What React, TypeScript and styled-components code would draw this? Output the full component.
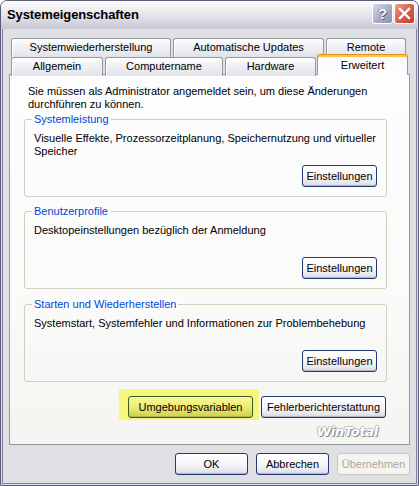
import styled, { createGlobalStyle } from "styled-components";

const GlobalStyle = createGlobalStyle`
  html, body {
    margin: 0;
    padding: 0;
    background: #ffffff;
  }
  * {
    box-sizing: border-box;
  }
`;

const Window = styled.div`
  width: 419px;
  height: 486px;
  display: flex;
  flex-direction: column;
  border: 1px solid #5b5a78;
  border-radius: 7px 7px 0 0;
  overflow: hidden;
  background: #e0dfe3;
  font-family: "Liberation Sans", Arial, sans-serif;
  font-size: 11px;
  color: #000;
`;

const TitleBar = styled.div`
  height: 28px;
  flex: none;
  display: flex;
  align-items: flex-start;
  justify-content: space-between;
  padding: 2px 3px 0 6px;
  background: linear-gradient(
    180deg,
    #ffffff 0%,
    #f1f1f5 25%,
    #dfdfe8 60%,
    #c7c7d4 100%
  );
`;

const Title = styled.span`
  font-weight: bold;
  font-size: 13px;
  line-height: 24px;
  letter-spacing: -0.1px;
`;

const Caption = styled.div`
  display: flex;
  gap: 1px;
`;

const HelpButton = styled.div`
  width: 21px;
  height: 21px;
  border: 1px solid #ffffff;
  border-radius: 3px;
  background: linear-gradient(135deg, #d9dbea 0%, #a9abc5 55%, #8e90ad 100%);
  display: flex;
  align-items: center;
  justify-content: center;
  font-family: "Liberation Sans", Arial, sans-serif;
  font-weight: bold;
  font-size: 15px;
  color: #f6f6fa;
  text-shadow: 1px 1px 0 #5d5f7e, -1px 0 0 #7c7e9c;
`;

const CloseButton = styled.div`
  width: 21px;
  height: 21px;
  border: 1px solid #ffffff;
  border-radius: 3px;
  background: linear-gradient(135deg, #f0a08e 0%, #d9604a 50%, #c13e2a 100%);
  display: flex;
  align-items: center;
  justify-content: center;
`;

const Body = styled.div`
  flex: 1;
  display: flex;
  flex-direction: column;
  padding: 9px 7px 9px 7px;
  border: 1px solid #dedde8;
  border-top: none;
  box-shadow: inset 1px 0 #807f99, inset -1px 0 #807f99, inset 0 -1px #807f99;
`;

const TabStrip = styled.div`
  display: flex;
  flex-direction: column;
  padding-left: 2px;
`;

const TabRow = styled.div<{ $h: number }>`
  display: flex;
  align-items: flex-end;
  gap: 2px;
  height: ${(p) => p.$h}px;
`;

const Tab = styled.div<{ $w: number; $active?: boolean }>`
  width: ${(p) => p.$w}px;
  height: ${(p) => (p.$active ? 21 : 19)}px;
  align-self: ${(p) => (p.$active ? "flex-end" : "stretch")};
  margin-bottom: ${(p) => (p.$active ? -1 : 0)}px;
  position: relative;
  z-index: ${(p) => (p.$active ? 2 : 1)};
  border: 1px solid #919b9c;
  border-bottom: none;
  border-top-color: ${(p) => (p.$active ? "#e68b2c" : "#919b9c")};
  border-radius: 3px 3px 0 0;
  background: ${(p) =>
    p.$active
      ? "#fcfcfe"
      : "linear-gradient(180deg, #fefefe 0%, #f1f1f5 40%, #e2e2ea 100%)"};
  box-shadow: ${(p) =>
    p.$active ? "inset 0 2px 0 #ffc83c" : "inset 1px 1px 0 #ffffff"};
  text-align: center;
  line-height: ${(p) => (p.$active ? 16 : 17)}px;
  padding-top: ${(p) => (p.$active ? 2 : 0)}px;
  white-space: nowrap;
`;

const Panel = styled.div`
  flex: 1;
  display: flex;
  flex-direction: column;
  border: 1px solid #919b9c;
  background: linear-gradient(180deg, #fdfdfe 0%, #fafaf9 60%, #f4f4f1 100%);
  padding: 10px 22px 0 14px;
`;

const Intro = styled.p`
  margin: 0 0 0 4px;
  line-height: 13px;
`;

const Group = styled.div<{ $top: number }>`
  position: relative;
  height: 78px;
  margin-top: ${(p) => p.$top}px;
  border: 1px solid #d0d0bf;
  border-radius: 3px;
  display: flex;
  flex-direction: column;
  justify-content: space-between;
  padding: 12px 9px 9px 9px;
`;

const Legend = styled.span`
  position: absolute;
  top: -7px;
  left: 7px;
  padding: 0 2px;
  line-height: 13px;
  color: #0046d5;
  background: #fcfcfd;
`;

const GroupText = styled.p`
  margin: 0;
  line-height: 13px;
`;

const Button = styled.button<{ $w: number; $kind?: "normal" | "yellow" | "off" }>`
  width: ${(p) => p.$w}px;
  height: 22px;
  padding: 0;
  font-family: "Liberation Sans", Arial, sans-serif;
  font-size: 11px;
  border-radius: 3px;
  border: 1px solid
    ${(p) =>
      p.$kind === "off" ? "#c9c7ba" : p.$kind === "yellow" ? "#3c5a24" : "#1e3a70"};
  color: ${(p) => (p.$kind === "off" ? "#aca899" : "#000")};
  background: ${(p) =>
    p.$kind === "off"
      ? "#f4f4f0"
      : p.$kind === "yellow"
      ? "linear-gradient(180deg, #f8f89a 0%, #ecec74 50%, #cfd14c 100%)"
      : "linear-gradient(180deg, #ffffff 0%, #f6f6f9 50%, #e6e6ee 85%, #d3d3de 100%)"};
  box-shadow: ${(p) =>
    p.$kind === "off" ? "none" : "inset 0 -1px 0 rgba(120, 120, 150, 0.35)"};
  align-self: flex-end;
  flex: none;
`;

const ActionRow = styled.div`
  display: flex;
  justify-content: flex-end;
  align-items: flex-end;
  gap: 2px;
  margin-top: 7px;
  padding-right: 1px;
`;

const Highlight = styled.div`
  display: flex;
  padding: 7px 6px 2px 9px;
  background: #f6f67c;
`;

const SideButton = styled(Button)`
  margin-bottom: 2px;
`;

const Watermark = styled.div`
  align-self: flex-end;
  margin: 5px 9px 0 0;
  font-family: "DejaVu Sans", sans-serif;
  font-weight: bold;
  font-style: italic;
  font-size: 13px;
  letter-spacing: -0.3px;
  line-height: 14px;
  color: #ffffff;
  text-shadow: 1px 1px 0 #8d8d8d, -1px 0 0 #b5b5b5, 0 -1px 0 #c0c0c0;
`;

const Footer = styled.div`
  display: flex;
  justify-content: flex-end;
  gap: 8px;
  margin-top: 8px;
`;

function App() {
  return (
    <>
      <GlobalStyle />
      <Window>
        <TitleBar>
          <Title>Systemeigenschaften</Title>
          <Caption>
            <HelpButton>?</HelpButton>
            <CloseButton>
              <svg width="13" height="13" viewBox="0 0 13 13">
                <path
                  d="M2 2 L11 11 M11 2 L2 11"
                  stroke="#ffffff"
                  strokeWidth="2.4"
                  strokeLinecap="square"
                />
              </svg>
            </CloseButton>
          </Caption>
        </TitleBar>
        <Body>
          <TabStrip>
            <TabRow $h={19}>
              <Tab $w={160}>Systemwiederherstellung</Tab>
              <Tab $w={151}>Automatische Updates</Tab>
              <Tab $w={80}>Remote</Tab>
            </TabRow>
            <TabRow $h={17}>
              <Tab $w={92}>Allgemein</Tab>
              <Tab $w={118}>Computername</Tab>
              <Tab $w={91}>Hardware</Tab>
              <Tab $w={91} $active style={{ marginLeft: -1 }}>
                Erweitert
              </Tab>
            </TabRow>
          </TabStrip>
          <Panel>
            <Intro>
              Sie müssen als Administrator angemeldet sein, um diese Änderungen
              <br />
              durchführen zu können.
            </Intro>
            <Group $top={8}>
              <Legend>Systemleistung</Legend>
              <GroupText>
                Visuelle Effekte, Prozessorzeitplanung, Speichernutzung und virtueller
                <br />
                Speicher
              </GroupText>
              <Button $w={75}>Einstellungen</Button>
            </Group>
            <Group $top={14}>
              <Legend>Benutzerprofile</Legend>
              <GroupText>Desktopeinstellungen bezüglich der Anmeldung</GroupText>
              <Button $w={75}>Einstellungen</Button>
            </Group>
            <Group $top={15}>
              <Legend>Starten und Wiederherstellen</Legend>
              <GroupText>
                Systemstart, Systemfehler und Informationen zur Problembehebung
              </GroupText>
              <Button $w={75}>Einstellungen</Button>
            </Group>
            <ActionRow>
              <Highlight>
                <Button $w={125} $kind="yellow">
                  Umgebungsvariablen
                </Button>
              </Highlight>
              <SideButton $w={125}>Fehlerberichterstattung</SideButton>
            </ActionRow>
            <Watermark>WinTotal</Watermark>
          </Panel>
          <Footer>
            <Button $w={73}>OK</Button>
            <Button $w={73}>Abbrechen</Button>
            <Button $w={73} $kind="off">
              Übernehmen
            </Button>
          </Footer>
        </Body>
      </Window>
    </>
  );
}

export default App;
